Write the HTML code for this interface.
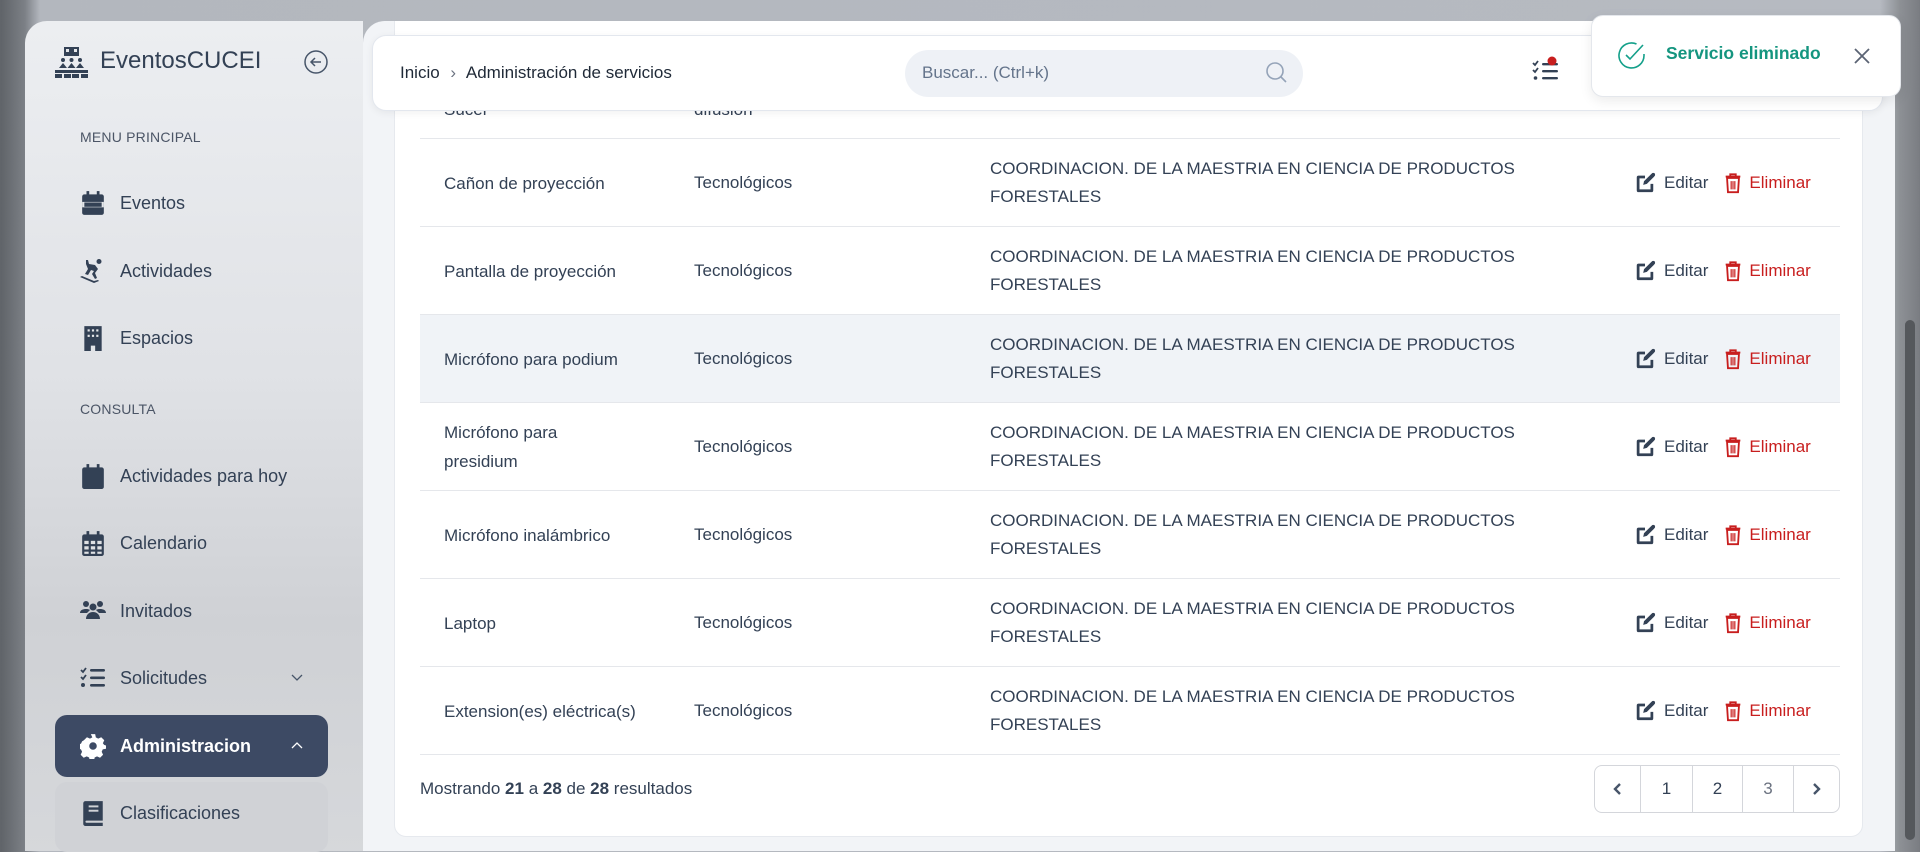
<!DOCTYPE html>
<html><head><meta charset="utf-8"><style>
*{box-sizing:border-box;margin:0;padding:0}
body{width:1920px;height:840px;overflow:hidden;position:relative;font-family:"Liberation Sans",Arial,sans-serif;background:linear-gradient(90deg,#5f6368 0,#7c8086 25px,#b3b7be 40px,#b6bac1 1880px,#8d9095 1900px,#7a7d82 1920px);color:#334155}
.abs{position:absolute}
.side{left:25px;top:21px;width:338px;height:830px;border-radius:22px 0 0 0;background:linear-gradient(180deg,#eceef1 0,#e0e2e6 350px,#cfd1d5 600px,#d6d8db 840px)}
.lbl{left:80px;font-size:14px;color:#4b5566;letter-spacing:.2px}
.item{left:80px;height:30px;display:flex;align-items:center;font-size:18px;color:#334155}
.item svg{width:26px;height:26px;margin-right:14px;fill:#334155}
.main{left:363px;top:21px;width:1532px;height:830px;background:#f2f4f7;border-radius:22px 0 0 0;overflow:hidden}
.card{left:31px;top:-40px;width:1469px;height:856px;background:#fff;border-radius:0 0 12px 12px;border:1px solid #e6e9ee}
.row{position:absolute;left:25px;width:1420px;height:88px;border-bottom:1.5px solid #e5e7eb;font-size:17px;color:#334155}
.row div{position:absolute}
.c1{left:24px;top:0;height:88px;display:flex;align-items:center;width:180px;line-height:29px}
.c2{left:274px;top:0;height:88px;display:flex;align-items:center}
.c3{left:570px;top:0;height:88px;display:flex;align-items:center;line-height:28.5px;width:540px}
.act{left:1214px;top:0;height:88px;display:flex;align-items:center}
.act svg{width:22px;height:22px}
.hdr{left:372px;top:35px;width:1511px;height:76px;background:#fff;border-radius:14px;box-shadow:0 2px 8px rgba(0,0,0,.06);border:1px solid #e3e7ee}
.pg{left:1594px;top:765px;width:246px;height:48px;border:1.5px solid #d4d6db;border-radius:8px;display:flex;font-size:17px}
.pg div{border-right:1.5px solid #d4d6db;display:flex;align-items:center;justify-content:center;color:#334155}
</style></head><body>
<div class="abs" style="left:1905px;top:320px;width:10px;height:520px;border-radius:5px;background:#55585c"></div>

<div class="abs side"></div>
<svg class="abs" style="left:55px;top:47px" width="33" height="31" viewBox="0 0 33 31" fill="#334155"><rect x="9" y="0" width="15" height="9"/><rect x="11" y="2" width="3" height="3" fill="#e6e8eb"/><rect x="19" y="2" width="3" height="3" fill="#e6e8eb"/><circle cx="8" cy="13" r="2"/><circle cx="16.5" cy="13" r="2"/><circle cx="25" cy="13" r="2"/><path d="M4 21l4-5 4 5zM12.5 21l4-5 4 5zM21 21l4-5 4 5z"/><rect x="0" y="23" width="33" height="3"/><rect x="0" y="27" width="7" height="4"/><rect x="9" y="27" width="7" height="4"/><rect x="17" y="27" width="7" height="4"/><rect x="26" y="27" width="7" height="4"/></svg>
<div class="abs" style="left:100px;top:47px;font-size:24px;color:#334155">EventosCUCEI</div>
<svg class="abs" style="left:304px;top:50px" width="24" height="24" viewBox="0 0 24 24" fill="none" stroke="#475569" stroke-width="1.5"><circle cx="12" cy="12" r="11"/><path d="M17 12H7M11 8l-4 4 4 4"/></svg>

<div class="abs lbl" style="top:129px">MENU PRINCIPAL</div>
<div class="abs item" style="top:188px"><svg viewBox="0 0 24 24"><rect x="2" y="4" width="20" height="19" rx="2"/><rect x="6" y="1" width="2.5" height="5"/><rect x="15.5" y="1" width="2.5" height="5"/><rect x="2" y="11" width="20" height="5" fill="#e4e6e9"/><rect x="4" y="11.5" width="16" height="4"/></svg>Eventos</div>
<div class="abs item" style="top:256px"><svg viewBox="0 0 26 26"><circle cx="19" cy="3.5" r="2.5"/><path d="M6 2l2 0 1 4 6 1 3 4-3 4 2 5-2 1-3-5 2-3-3-1-3 5-3-1 3-5-2-5z"/><path d="M0 19l2-1 12 5 4-1 1 1-5 2-14-6z"/></svg>Actividades</div>
<div class="abs item" style="top:323px"><svg viewBox="0 0 24 24"><path d="M4 1h16v23h-6v-5h-4v5H4z"/><g fill="#e4e6e9"><rect x="7" y="4" width="2" height="2"/><rect x="11" y="4" width="2" height="2"/><rect x="15" y="4" width="2" height="2"/><rect x="7" y="9" width="2" height="2"/><rect x="11" y="9" width="2" height="2"/><rect x="15" y="9" width="2" height="2"/></g></svg>Espacios</div>
<div class="abs lbl" style="top:401px">CONSULTA</div>
<div class="abs item" style="top:461px"><svg viewBox="0 0 24 24"><rect x="2" y="4" width="20" height="20" rx="2"/><rect x="6" y="1" width="2.5" height="5"/><rect x="15.5" y="1" width="2.5" height="5"/></svg>Actividades para hoy</div>
<div class="abs item" style="top:528px"><svg viewBox="0 0 24 24"><rect x="2" y="4" width="20" height="20" rx="2"/><rect x="6" y="1" width="2.5" height="5"/><rect x="15.5" y="1" width="2.5" height="5"/><g fill="#dfe1e4"><rect x="4" y="10" width="4" height="3"/><rect x="10" y="10" width="4" height="3"/><rect x="16" y="10" width="4" height="3"/><rect x="4" y="15" width="4" height="3"/><rect x="10" y="15" width="4" height="3"/><rect x="16" y="15" width="4" height="3"/><rect x="4" y="20" width="4" height="2"/><rect x="10" y="20" width="4" height="2"/><rect x="16" y="20" width="4" height="2"/></g></svg>Calendario</div>
<div class="abs item" style="top:596px"><svg viewBox="0 0 26 24"><circle cx="6" cy="5" r="3"/><circle cx="20" cy="5" r="3"/><circle cx="13" cy="8" r="3.5"/><path d="M0 14c0-3 3-4 6-4s4 1 4 1l-3 3zM26 14c0-3-3-4-6-4s-4 1-4 1l3 3zM6 20c0-4 3-7 7-7s7 3 7 7z"/></svg>Invitados</div>
<div class="abs item" style="top:663px"><svg viewBox="0 0 26 24"><path d="M1 4l2 2 3-4" stroke="#334155" stroke-width="1.8" fill="none"/><path d="M1 11l2 2 3-4" stroke="#334155" stroke-width="1.8" fill="none"/><circle cx="3" cy="19" r="2"/><rect x="10" y="3" width="15" height="2.6" rx="1.3"/><rect x="10" y="10.5" width="15" height="2.6" rx="1.3"/><rect x="10" y="18" width="15" height="2.6" rx="1.3"/></svg>Solicitudes</div>
<svg class="abs" style="left:290px;top:672px" width="14" height="10" viewBox="0 0 14 10" fill="none" stroke="#475569" stroke-width="1.3"><path d="M2 3l5 5 5-5"/></svg>
<div class="abs" style="left:55px;top:715px;width:273px;height:62px;border-radius:12px;background:#3d4a64"></div>
<div class="abs item" style="top:731px;color:#fff;font-weight:bold"><svg viewBox="0 0 24 24" style="fill:#fff"><path d="M10 1h4l.6 3 2.2 1.2 2.8-1.3 2.8 2.8-1.3 2.8L22.3 11l1.7.5v3l-3 .6-1 2.2 1.3 2.8-2.8 2.8-2.8-1.3-2.2 1-.5 3h-4l-.6-3-2.2-1-2.8 1.3-2.8-2.8 1.3-2.8-1-2.2-3-.6v-4l3-.6 1-2.2L3.6 6.7l2.8-2.8 2.8 1.3L11.4 4zM12 8.5a3.5 3.5 0 100 7 3.5 3.5 0 000-7z"/></svg>Administracion</div>
<svg class="abs" style="left:290px;top:741px" width="14" height="10" viewBox="0 0 14 10" fill="none" stroke="#fff" stroke-width="1.3"><path d="M2 7l5-5 5 5"/></svg>
<div class="abs" style="left:55px;top:782px;width:273px;height:70px;border-radius:12px;background:#d0d2d6"></div>
<div class="abs item" style="top:798px"><svg viewBox="0 0 24 24"><path d="M3 3a2 2 0 012-2h16v18H6a1 1 0 000 2h15v3H5a2 2 0 01-2-2z"/><rect x="8" y="5" width="9" height="1.8" fill="#d0d2d6"/><rect x="8" y="9" width="9" height="1.8" fill="#d0d2d6"/></svg>Clasificaciones</div>

<div class="abs main">
 <div class="abs" style="left:42px;top:-8px;font-size:15px;color:#9aa3ae;font-weight:bold">◆ NOMBRE</div>
 <div class="abs" style="left:330px;top:-8px;font-size:15px;color:#9aa3ae;font-weight:bold">◆ CATEGORIA</div>
 <div class="abs" style="left:627px;top:-8px;font-size:15px;color:#9aa3ae;font-weight:bold">AREA</div>
 <div class="abs card">
  <div class="row" style="top:69px"><div class="c1">Audio y<br>Sucel</div><div class="c2" style="line-height:29px">Infraestructura<br>difusión</div></div>
  <div class="row" style="top:157px"><div class="c1">Cañon de proyección</div><div class="c2">Tecnológicos</div><div class="c3">COORDINACION. DE LA MAESTRIA EN CIENCIA DE PRODUCTOS FORESTALES</div><div class="act">ACT</div></div>
  <div class="row" style="top:245px"><div class="c1">Pantalla de proyección</div><div class="c2">Tecnológicos</div><div class="c3">COORDINACION. DE LA MAESTRIA EN CIENCIA DE PRODUCTOS FORESTALES</div><div class="act">ACT</div></div>
  <div class="row" style="top:333px;background:#f0f3f7"><div class="c1">Micrófono para podium</div><div class="c2">Tecnológicos</div><div class="c3">COORDINACION. DE LA MAESTRIA EN CIENCIA DE PRODUCTOS FORESTALES</div><div class="act">ACT</div></div>
  <div class="row" style="top:421px"><div class="c1">Micrófono para presidium</div><div class="c2">Tecnológicos</div><div class="c3">COORDINACION. DE LA MAESTRIA EN CIENCIA DE PRODUCTOS FORESTALES</div><div class="act">ACT</div></div>
  <div class="row" style="top:509px"><div class="c1">Micrófono inalámbrico</div><div class="c2">Tecnológicos</div><div class="c3">COORDINACION. DE LA MAESTRIA EN CIENCIA DE PRODUCTOS FORESTALES</div><div class="act">ACT</div></div>
  <div class="row" style="top:597px"><div class="c1">Laptop</div><div class="c2">Tecnológicos</div><div class="c3">COORDINACION. DE LA MAESTRIA EN CIENCIA DE PRODUCTOS FORESTALES</div><div class="act">ACT</div></div>
  <div class="row" style="top:685px"><div class="c1" style="width:220px">Extension(es) eléctrica(s)</div><div class="c2">Tecnológicos</div><div class="c3">COORDINACION. DE LA MAESTRIA EN CIENCIA DE PRODUCTOS FORESTALES</div><div class="act">ACT</div></div>
  <div class="abs" style="left:25px;top:797px;font-size:17px;color:#334155">Mostrando <b>21</b> a <b>28</b> de <b>28</b> resultados</div>
 </div>
</div>

<div class="abs pg"><div style="width:46px"><svg width="12" height="14" viewBox="0 0 12 14" fill="none" stroke="#475569" stroke-width="2.4"><path d="M8 2L3 7l5 5"/></svg></div><div style="width:52px">1</div><div style="width:50px">2</div><div style="width:51px;color:#6b7280">3</div><div style="width:44px;border:none"><svg width="12" height="14" viewBox="0 0 12 14" fill="none" stroke="#475569" stroke-width="2.4"><path d="M4 2l5 5-5 5"/></svg></div></div>

<div class="abs hdr"></div>
<div class="abs" style="left:400px;top:63px;font-size:17px;color:#1f2937">Inicio <span style="color:#6b7280;margin:0 6px">›</span> Administración de servicios</div>
<div class="abs" style="left:905px;top:50px;width:398px;height:47px;border-radius:24px;background:#eef1f6"></div>
<div class="abs" style="left:922px;top:63px;font-size:17px;color:#64748b">Buscar... (Ctrl+k)</div>
<svg class="abs" style="left:1265px;top:61px" width="24" height="24" viewBox="0 0 24 24" fill="none" stroke="#94a3b8" stroke-width="1.6"><circle cx="10" cy="10" r="8"/><path d="M16 16l5 5"/></svg>
<svg class="abs" style="left:1532px;top:56px" width="28" height="28" viewBox="0 0 28 28"><path d="M1 7l2 2 3-4M1 14l2 2 3-4" stroke="#334155" stroke-width="1.8" fill="none"/><circle cx="3.5" cy="22" r="1.8" fill="#334155"/><rect x="10" y="7" width="16" height="2.4" rx="1.2" fill="#334155"/><rect x="10" y="14" width="16" height="2.4" rx="1.2" fill="#334155"/><rect x="10" y="21" width="16" height="2.4" rx="1.2" fill="#334155"/><circle cx="20" cy="5" r="4.5" fill="#c81e1e"/></svg>

<div class="abs" style="left:1591px;top:15px;width:310px;height:82px;background:#fff;border-radius:12px;border:1px solid #e4e7ec;box-shadow:0 4px 12px rgba(0,0,0,.08)"></div>
<svg class="abs" style="left:1617px;top:41px" width="29" height="29" viewBox="0 0 29 29" fill="none" stroke="#14a08a" stroke-width="1.6"><path d="M27 13v1.5A12.5 12.5 0 1119.5 3"/><path d="M9 14l4 4 13-14"/></svg>
<div class="abs" style="left:1666px;top:43px;font-size:17.5px;color:#14957f;font-weight:bold">Servicio eliminado</div>
<svg class="abs" style="left:1852px;top:46px" width="20" height="20" viewBox="0 0 20 20" stroke="#5b6474" stroke-width="1.8"><path d="M3 3l14 14M17 3L3 17"/></svg>

<script>
document.querySelectorAll('.act').forEach(function(a){a.innerHTML='<svg viewBox="0 0 24 24" style="margin-right:8px"><path d="M3 6a2 2 0 012-2h7v3H6v12h12v-6h3v7a2 2 0 01-2 2H5a2 2 0 01-2-2z" fill="#334155"/><path d="M10 14l1-4 8-8 3 3-8 8z" fill="#334155"/><circle cx="21" cy="3" r="2" fill="#334155"/></svg><span style="color:#334155">Editar</span><svg viewBox="0 0 24 24" style="margin:0 5px 0 14px"><path d="M4 5h16M9 5V2.5h6V5" stroke="#c81e1e" stroke-width="2" fill="none"/><path d="M5.5 6.5l1 15.5h11l1-15.5z" stroke="#c81e1e" stroke-width="2" fill="none"/><path d="M10 10v9M12 10v9M14 10v9" stroke="#c81e1e" stroke-width="1.3"/></svg><span style="color:#c81e1e">Eliminar</span>';});
</script>
</body></html>
